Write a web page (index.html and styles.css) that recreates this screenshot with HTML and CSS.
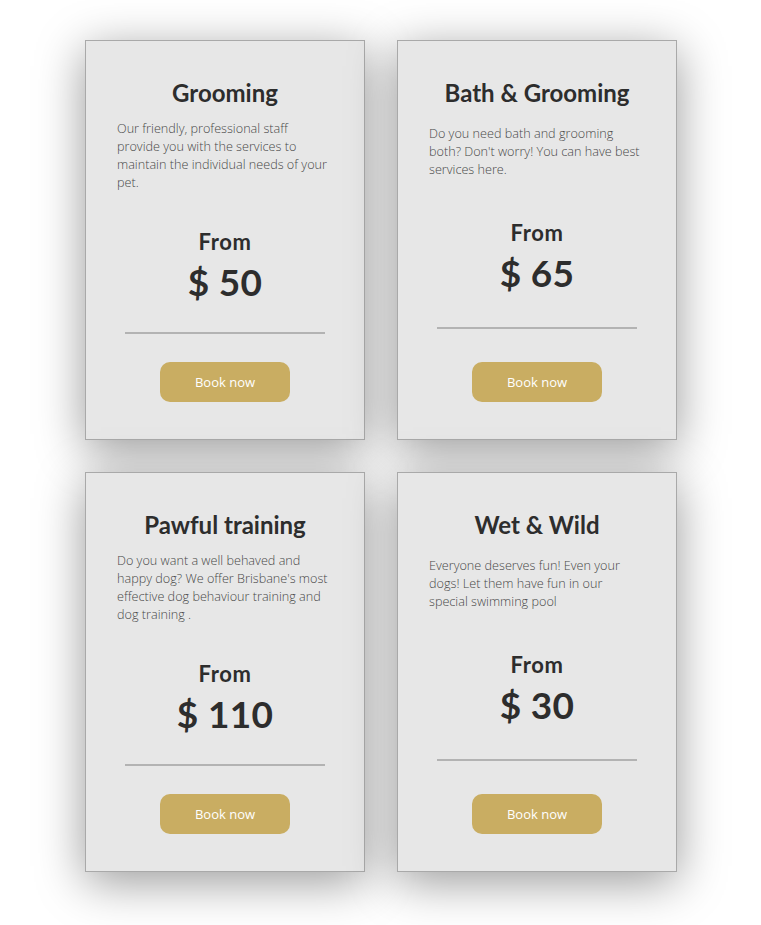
FILE: index.html
```html
<!DOCTYPE html>
<html lang="en">
<head>
<meta charset="utf-8">
<title>Services</title>
<link rel="stylesheet" href="styles.css">
</head>
<body>
<main class="services">
  <article class="card">
    <h2 class="card-title">Grooming</h2>
    <p class="card-text">Our friendly, professional staff provide you with the services to maintain the individual needs of your pet.</p>
    <div class="price"><div class="price-from">From</div><div class="price-value">$ 50</div></div>
    <hr class="divider">
    <a class="btn" href="#">Book now</a>
  </article>
  <article class="card">
    <h2 class="card-title">Bath &amp; Grooming</h2>
    <p class="card-text">Do you need bath and grooming both? Don't worry! You can have best services here.</p>
    <div class="price"><div class="price-from">From</div><div class="price-value">$ 65</div></div>
    <hr class="divider">
    <a class="btn" href="#">Book now</a>
  </article>
  <article class="card">
    <h2 class="card-title">Pawful training</h2>
    <p class="card-text">Do you want a well behaved and happy dog? We offer Brisbane's most effective dog behaviour training and dog training .</p>
    <div class="price"><div class="price-from">From</div><div class="price-value">$ 110</div></div>
    <hr class="divider">
    <a class="btn" href="#">Book now</a>
  </article>
  <article class="card">
    <h2 class="card-title">Wet &amp; Wild</h2>
    <p class="card-text">Everyone deserves fun! Even your dogs! Let them have fun in our special swimming pool</p>
    <div class="price"><div class="price-from">From</div><div class="price-value">$ 30</div></div>
    <hr class="divider">
    <a class="btn" href="#">Book now</a>
  </article>
</main>
</body>
</html>
```

FILE: styles.css
```css
html, body {
  margin: 0;
  padding: 0;
  background: #ffffff;
}

body {
  font-family: "Open Sans", "Liberation Sans", sans-serif;
  color: #2d2d2d;
}

.services {
  display: grid;
  grid-template-columns: 280px 280px;
  grid-auto-rows: 400px;
  gap: 32px;
  padding: 40px 84px 53px 85px;
}

.card {
  box-sizing: border-box;
  display: flex;
  flex-direction: column;
  justify-content: space-between;
  align-items: center;
  height: 400px;
  padding: 38px 31px 37px;
  background: #e7e7e7;
  border: 1px solid #a9a9a9;
  box-shadow: 0 10px 45px rgba(0, 0, 0, 0.4);
}

.card-title {
  margin: 0;
  font-family: Lato, "Open Sans", sans-serif;
  font-weight: 700;
  font-size: 24px;
  line-height: 28px;
  color: #2d2d2d;
  text-align: center;
}

.card-text {
  align-self: stretch;
  margin: 12px 3px 0 0;
  font-family: "Open Sans", sans-serif;
  font-weight: 300;
  font-size: 12.65px;
  line-height: 18px;
  color: #474747;
}

.price {
  margin-top: 37px;
  text-align: center;
  font-family: Lato, "Open Sans", sans-serif;
  font-weight: 700;
  color: #2d2d2d;
}

.price-from {
  font-size: 22px;
  line-height: 26px;
  letter-spacing: 0.6px;
  margin-bottom: 5px;
}

.price-value {
  font-size: 37px;
  line-height: 44px;
  letter-spacing: 0.3px;
}

.divider {
  flex: none;
  width: 200px;
  height: 2px;
  margin: 28px 0 0;
  border: 0;
  background: #b3b3b3;
}

.btn {
  flex: none;
  display: flex;
  align-items: center;
  justify-content: center;
  width: 130px;
  height: 40px;
  margin-top: 28px;
  border-radius: 10px;
  background: #c9ad62;
  color: #ffffff;
  font-family: "Open Sans", sans-serif;
  font-size: 13px;
  font-weight: 400;
  text-decoration: none;
}
```
